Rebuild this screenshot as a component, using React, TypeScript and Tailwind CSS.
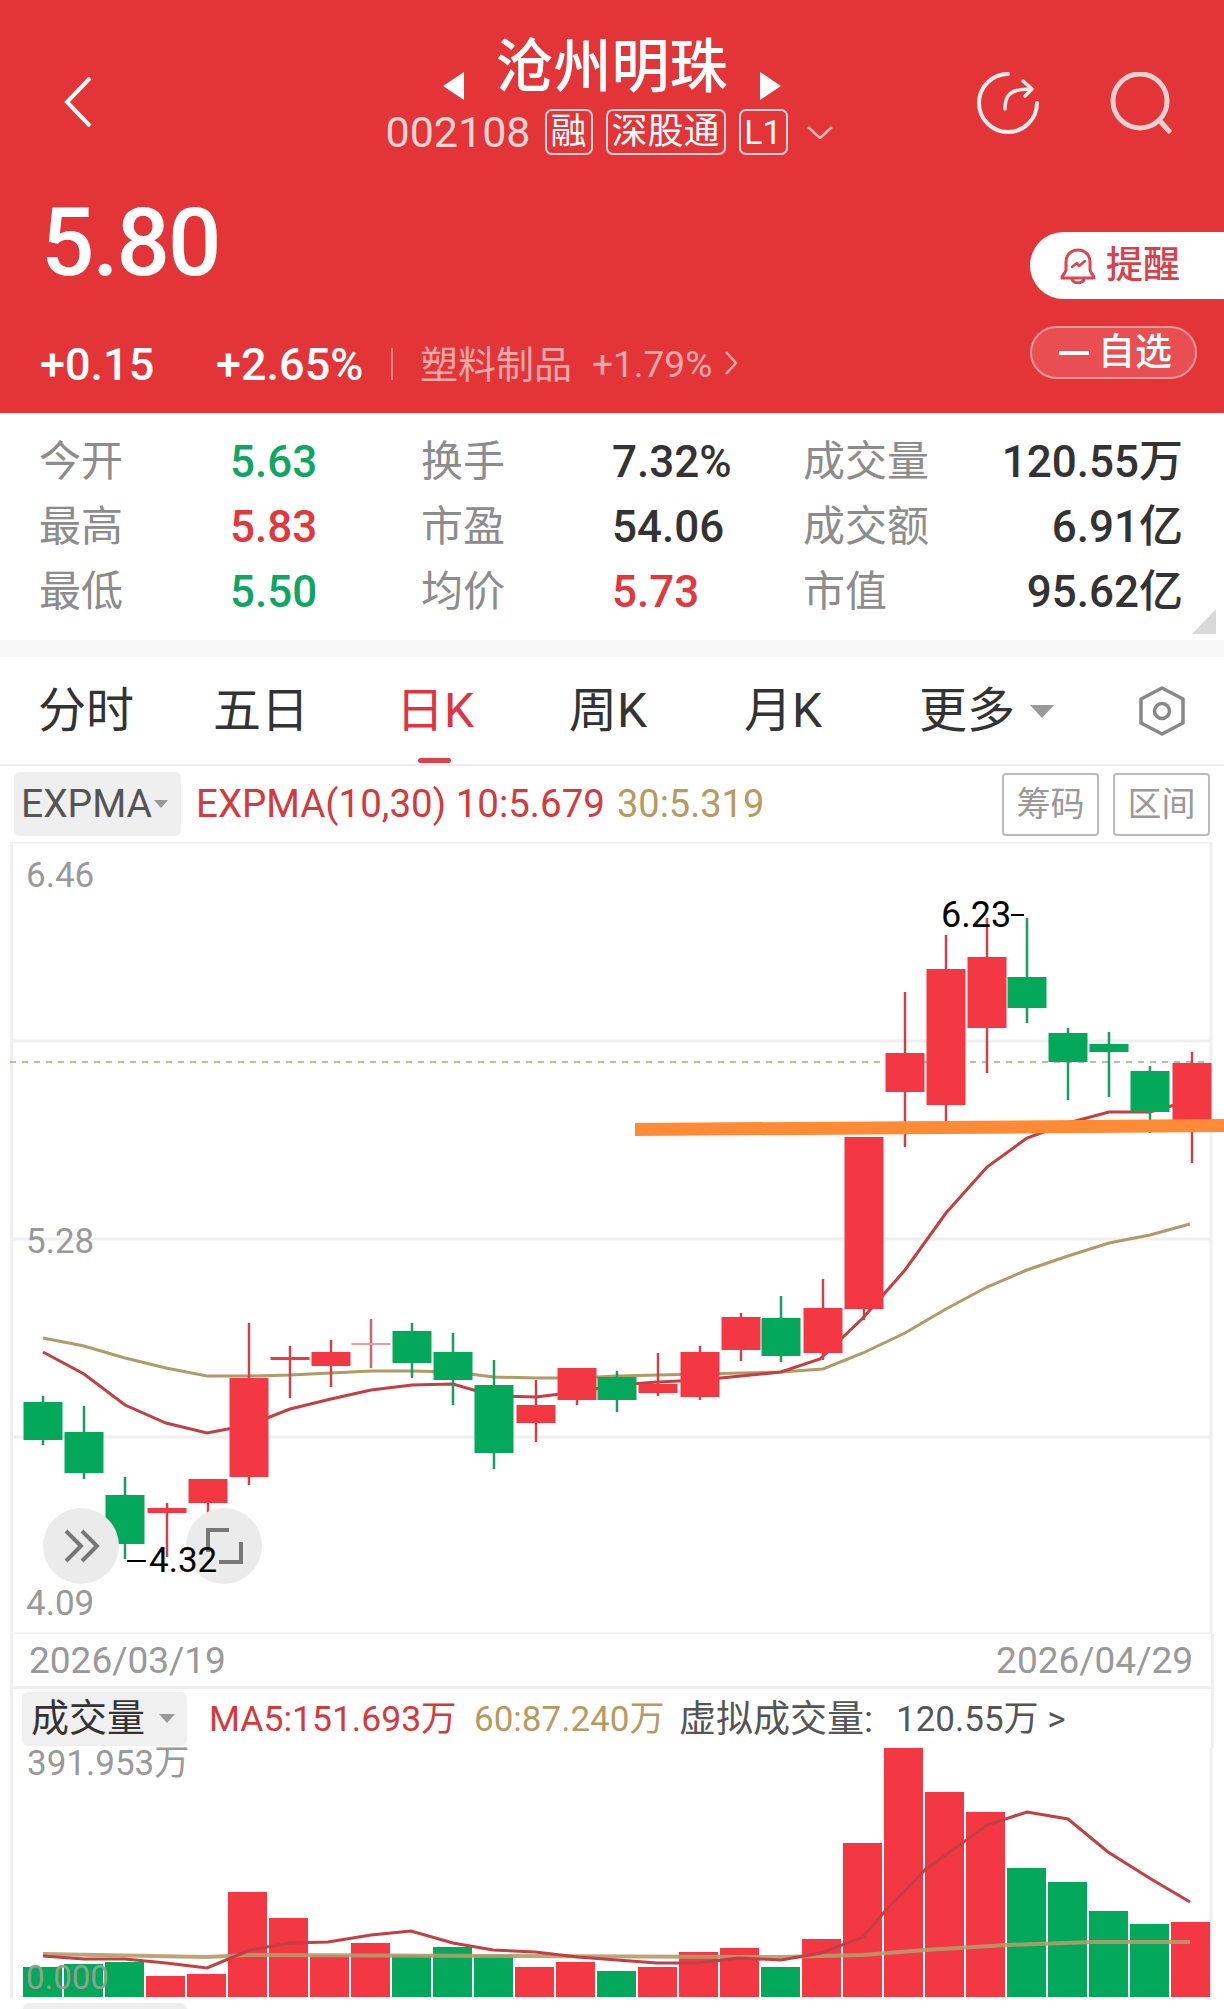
const RED = "#f43843";
const GREEN = "#04a85b";

// [x, bodyTop, bodyBottom, wickTop, wickBottom, color]
type Candle = [number, number, number, number, number, "r" | "g" | "p"];

const candles: Candle[] = [
  [43, 1402, 1440, 1396, 1445, "g"],
  [84, 1432, 1473, 1406, 1479, "g"],
  [125, 1495, 1544, 1477, 1559, "g"],
  [167, 1508, 1513, 1503, 1557, "r"],
  [208, 1479, 1503, 1479, 1515, "r"],
  [249, 1378, 1477, 1323, 1485, "r"],
  [290, 1357, 1360, 1346, 1398, "r"],
  [331, 1352, 1366, 1340, 1387, "r"],
  [371, 1343, 1345, 1319, 1368, "p"],
  [412, 1331, 1363, 1323, 1378, "g"],
  [453, 1352, 1380, 1333, 1405, "g"],
  [494, 1385, 1453, 1360, 1469, "g"],
  [536, 1405, 1423, 1380, 1442, "r"],
  [577, 1368, 1400, 1368, 1405, "r"],
  [617, 1377, 1400, 1371, 1412, "g"],
  [658, 1384, 1393, 1353, 1396, "r"],
  [700, 1352, 1397, 1346, 1400, "r"],
  [741, 1317, 1350, 1313, 1361, "r"],
  [781, 1318, 1356, 1296, 1362, "g"],
  [823, 1308, 1353, 1279, 1360, "r"],
  [864, 1137, 1309, 1137, 1320, "r"],
  [905, 1053, 1092, 992, 1147, "r"],
  [946, 969, 1105, 935, 1133, "r"],
  [987, 957, 1028, 918, 1073, "r"],
  [1027, 977, 1008, 918, 1023, "g"],
  [1068, 1033, 1062, 1028, 1100, "g"],
  [1109, 1044, 1052, 1032, 1097, "g"],
  [1150, 1071, 1112, 1066, 1133, "g"],
  [1192, 1063, 1122, 1052, 1163, "r"],
];

const expma10 =
  "43,1352 84,1374 125,1405 166,1423 207,1433 249,1425 290,1409 331,1399 371,1390 412,1385 453,1384 494,1396 536,1397 577,1392 617,1385 658,1382 700,1380 741,1376 781,1372 820,1359 863,1318 905,1270 946,1213 987,1167 1027,1138 1068,1123 1109,1112 1150,1112 1192,1100";
const expma30 =
  "43,1338 84,1346 125,1358 166,1368 207,1376 249,1376 290,1375 331,1373 371,1371 412,1371 453,1372 494,1377 536,1378 577,1378 617,1376 658,1375 700,1374 741,1373 781,1372 823,1369 863,1353 905,1333 946,1309 987,1287 1027,1270 1068,1256 1109,1243 1150,1235 1190,1224";

// [bar top, color] from left to right, baseline 1997
const volumes: [number, "r" | "g"][] = [
  [1967, "g"], [1964, "g"], [1962, "g"], [1976, "r"], [1974, "r"], [1892, "r"],
  [1918, "r"], [1955, "r"], [1943, "r"], [1955, "g"], [1947, "g"], [1955, "g"],
  [1967, "r"], [1962, "r"], [1971, "g"], [1967, "r"], [1952, "r"], [1948, "r"],
  [1967, "g"], [1939, "r"], [1843, "r"], [1747, "r"], [1792, "r"], [1812, "r"],
  [1868, "g"], [1882, "g"], [1911, "g"], [1924, "g"], [1922, "r"],
];

const ma5 =
  "43,1956 84,1959 125,1959 166,1963 207,1968 250,1950 290,1943 328,1942 371,1935 411,1931 453,1943 493,1950 535,1952 578,1957 617,1960 657,1963 699,1963 738,1958 781,1960 821,1953 863,1937 886,1910 925,1870 987,1825 1027,1812 1068,1819 1108,1852 1151,1879 1190,1902";
const ma60 = "43,1954 207,1957 250,1955 781,1957 863,1955 925,1950 1007,1945 1093,1942 1190,1942";

const stats = [
  ["今开", "5.63", "text-[#0fa563]", "换手", "7.32%", "text-[#333]", "成交量", "120.55万"],
  ["最高", "5.83", "text-[#e0383c]", "市盈", "54.06", "text-[#333]", "成交额", "6.91亿"],
  ["最低", "5.50", "text-[#0fa563]", "均价", "5.73", "text-[#e0383c]", "市值", "95.62亿"],
];

function PriceChart() {
  return (
    <div className="relative h-[792px]">
      <svg width="1224" height="792" viewBox="0 842 1224 792" className="block">
        {[842, 1041, 1239, 1437, 1634].map((y) => (
          <line key={y} x1="11" x2="1210" y1={y} y2={y} stroke="#efefef" strokeWidth="3" />
        ))}
        <line x1="11.5" x2="11.5" y1="842" y2="1634" stroke="#efefef" strokeWidth="3" />
        <line x1="1211" x2="1211" y1="842" y2="1634" stroke="#efefef" strokeWidth="3" />
        <line x1="10" x2="1210" y1="1062" y2="1062" stroke="#bdbda6" strokeWidth="2" strokeDasharray="6 6" />
        <polyline points={expma30} fill="none" stroke="#b09a68" strokeWidth="3" />
        <polyline points={expma10} fill="none" stroke="#c23f44" strokeWidth="3" />
        {candles.map(([x, top, bottom, wt, wb, c]) => {
          const wick = c === "g" ? "#1b9c60" : c === "p" ? "#c9646c" : "#c9434c";
          const fill = c === "g" ? GREEN : c === "p" ? "#ec9aa2" : RED;
          return (
            <g key={x}>
              <line x1={x} x2={x} y1={wt} y2={wb} stroke={wick} strokeWidth="2.5" />
              <rect x={x - 19.5} y={top} width="39" height={bottom - top} fill={fill} />
            </g>
          );
        })}
        <polygon points="635,1123 1224,1119 1224,1132 635,1136" fill="#ff8b36" />
        <circle cx="81" cy="1546" r="38" fill="#ebebeb" />
        <polyline points="66,1531 81,1546 66,1561" fill="none" stroke="#777" strokeWidth="4" />
        <polyline points="82,1531 97,1546 82,1561" fill="none" stroke="#777" strokeWidth="4" />
        <circle cx="224" cy="1546" r="38" fill="#ebebeb" />
        <polyline points="208,1552 208,1530 229,1530" fill="none" stroke="#777" strokeWidth="4" />
        <polyline points="241,1542 241,1562 219,1562" fill="none" stroke="#777" strokeWidth="4" />
        <line x1="127" x2="146" y1="1561" y2="1561" stroke="#000" strokeWidth="2" />
        <line x1="1011" x2="1024" y1="915" y2="915" stroke="#000" strokeWidth="2" />
      </svg>
      <span className="absolute left-[26px] top-[17px] text-[35px] leading-[34px] text-[#999]">6.46</span>
      <span className="absolute left-[26px] top-[383px] text-[35px] leading-[34px] text-[#999]">5.28</span>
      <span className="absolute left-[26px] top-[745px] text-[35px] leading-[34px] text-[#999]">4.09</span>
      <span className="absolute left-[941px] top-[55px] text-[36px] leading-[36px] text-black">6.23</span>
      <span className="absolute left-[149px] top-[701px] text-[35px] leading-[36px] text-black">4.32</span>
    </div>
  );
}

function VolumeChart() {
  return (
    <div className="relative h-[250px]">
      <svg width="1224" height="250" viewBox="0 1748 1224 250" className="block">
        <line x1="11.5" x2="11.5" y1="1748" y2="1998" stroke="#efefef" strokeWidth="3" />
        <line x1="1211" x2="1211" y1="1748" y2="1998" stroke="#efefef" strokeWidth="3" />
        {volumes.map(([top, c], i) => (
          <rect
            key={i}
            x={23 + i * 41}
            y={top}
            width="39"
            height={1997 - top}
            fill={c === "g" ? GREEN : RED}
          />
        ))}
        <polyline points={ma60} fill="none" stroke="#b59b6c" strokeWidth="4" opacity="0.9" />
        <polyline points={ma5} fill="none" stroke="#c23f44" strokeWidth="3" />
      </svg>
      <span className="absolute left-[27px] top-[-2px] text-[35px] leading-[36px] text-[#999]">391.953万</span>
      <span className="absolute left-[26px] top-[212px] text-[33px] leading-[36px] text-[#8fa08f]">0.000</span>
    </div>
  );
}

export default function App() {
  return (
    <div className="w-[1224px] h-[2009px] overflow-hidden bg-white font-['Roboto','Noto_Sans_CJK_SC',sans-serif]">
      {/* Red quote header */}
      <header className="h-[413px] bg-[#e33538] text-white flex flex-col">
        <div className="h-[160px] flex">
          <div className="w-[386px] pl-[64px] pt-[77px]">
            <svg width="28" height="50" viewBox="0 0 28 50" fill="none" stroke="#fff" strokeWidth="4">
              <polyline points="26,1 3,25 26,49" />
            </svg>
          </div>
          <div className="w-[446px] flex flex-col items-center">
            <div className="h-[109px] flex items-center pl-[5px]">
              <div className="w-0 h-0 mt-[62px] border-y-[14px] border-y-transparent border-r-[21px] border-r-white" />
              <span className="ml-[32px] pt-[25px] text-[58px] leading-[70px] font-medium w-[232px] text-center">沧州明珠</span>
              <div className="ml-[32px] w-0 h-0 mt-[62px] border-y-[14px] border-y-transparent border-l-[21px] border-l-white" />
            </div>
            <div className="h-[46px] flex items-center text-[#fbd5d5]">
              <span className="text-[43px] leading-[46px] mr-[14px]">002108</span>
              <span className="h-[46px] w-[48px] mr-[13px] flex items-center justify-center rounded-[7px] border-2 border-[#fbd5d5] text-white text-[36px] leading-none">融</span>
              <span className="h-[46px] w-[120px] mr-[13px] flex items-center justify-center rounded-[7px] border-2 border-[#fbd5d5] text-white text-[36px] leading-none">深股通</span>
              <span className="h-[46px] w-[49px] mr-[19px] flex items-center justify-center rounded-[7px] border-2 border-[#fbd5d5] text-white text-[34px] leading-none">L1</span>
              <svg width="26" height="13" viewBox="0 0 26 13" fill="none" stroke="#f9b9b9" strokeWidth="2.5">
                <polyline points="1,1 13,12 25,1" />
              </svg>
            </div>
          </div>
          <div className="flex-1 pl-[145px] pt-[72px] flex items-start gap-[71px]">
            <svg width="62" height="62" viewBox="0 0 62 62" fill="none" stroke="#fdeaea" strokeWidth="4" strokeLinecap="round" strokeLinejoin="round">
              <path d="M31 2 A29 29 0 1 0 60 31" />
              <path d="M28 37 C28 24 32 17 53 17" strokeWidth="3.5" />
              <polyline points="46,9 55,17 48,24" strokeWidth="3.5" />
            </svg>
            <svg width="62" height="62" viewBox="0 0 62 62" fill="none" stroke="#efd0d0" strokeWidth="5" strokeLinecap="round">
              <circle cx="30" cy="29" r="27" />
              <line x1="50" y1="49" x2="59" y2="59" />
            </svg>
          </div>
        </div>
        <div className="h-[166px] flex justify-between">
          <span className="ml-[41px] mt-[28px] text-[94px] leading-[110px] font-medium tracking-[-2px]">5.80</span>
          <div className="mt-[72px] h-[67px] w-[194px] rounded-l-[34px] bg-white flex items-center pl-[30px] gap-[10px] text-[#d8404a] text-[37px] font-medium">
            <svg width="36" height="36" viewBox="0 0 36 36" fill="none" stroke="#e04450" strokeWidth="3" strokeLinejoin="round" strokeLinecap="round">
              <path d="M2 30 C2 27 5 26 6 22 V14 C6 7 11 2 18 2 C25 2 30 7 30 14 V22 C31 26 34 27 34 30 Z" />
              <path d="M12 31 C13 36 23 36 24 31" />
              <polyline points="12,19 17,15 19,18 25,13" strokeWidth="2.5" />
            </svg>
            <span className="leading-none">提醒</span>
          </div>
        </div>
        <div className="flex items-start h-[87px]">
          <span className="ml-[40px] mt-[14px] w-[176px] text-[45px] leading-[50px] font-medium">+0.15</span>
          <span className="w-[175px] mt-[14px] text-[45px] leading-[50px] font-medium">+2.65%</span>
          <div className="mt-[22px] h-[32px] w-[2px] bg-[#f08080]" />
          <span className="ml-[27px] mt-[14px] text-[38px] leading-[50px] text-[#f6a9a9]">塑料制品</span>
          <span className="ml-[20px] mt-[14px] text-[37px] leading-[50px] text-[#f6a9a9]">+1.79%</span>
          <svg className="ml-[12px] mt-[25px]" width="14" height="24" viewBox="0 0 14 24" fill="none" stroke="#f6a9a9" strokeWidth="2.5">
            <polyline points="2,1 12,12 2,23" />
          </svg>
          <div className="ml-auto mr-[27px] h-[53px] w-[167px] rounded-[27px] border-2 border-[#f49a9a] bg-[#e94e53] flex items-center pl-[27px] text-[37px] font-medium text-white">
            <span className="w-[30px] h-[4px] bg-white mr-[9px]" />
            <span className="leading-none">自选</span>
          </div>
        </div>
      </header>

      {/* Quote stats */}
      <section className="relative h-[227px] pt-[16px] pl-[39px]">
        {stats.map((row) => (
          <div key={row[0]} className="h-[65px] flex items-center text-[42px]">
            <span className="w-[191px] text-[#8c8c8c]">{row[0]}</span>
            <span className={`w-[191px] text-[44px] font-medium ${row[2]}`}>{row[1]}</span>
            <span className="w-[191px] text-[#8c8c8c]">{row[3]}</span>
            <span className={`w-[191px] text-[44px] font-medium ${row[5]}`}>{row[4]}</span>
            <span className="w-[126px] text-[#8c8c8c]">{row[6]}</span>
            <span className="w-[254px] text-right text-[44px] font-medium text-[#333]">{row[7]}</span>
          </div>
        ))}
        <div className="absolute right-[8px] bottom-[6px] w-0 h-0 border-b-[25px] border-b-[#d9d9d9] border-l-[24px] border-l-transparent" />
      </section>
      <div className="h-[17px] bg-[#f8f8f8]" />

      {/* Period tabs */}
      <nav className="relative h-[109px] border-b-2 border-[#eee] text-[#333] text-[48px]">
        <div className="h-full flex items-center">
          <span className="ml-[38px] w-[175px]">分时</span>
          <span className="w-[183px]">五日</span>
          <span className="w-[173px] text-[#e03340]">日K</span>
          <span className="w-[175px]">周K</span>
          <span className="w-[175px]">月K</span>
          <span>更多</span>
          <div className="ml-[15px] mt-[2px] w-0 h-0 border-x-[12px] border-x-transparent border-t-[13px] border-t-[#999]" />
          <svg className="ml-[84px]" width="48" height="50" viewBox="0 0 48 50" fill="none" stroke="#888" strokeWidth="3.5">
            <path d="M24 2 L45 13 V37 L24 48 L3 37 V13 Z" strokeLinejoin="round" />
            <circle cx="24" cy="25" r="7.5" />
          </svg>
        </div>
        <div className="absolute left-[418px] bottom-[1px] w-[33px] h-[5px] rounded-full bg-[#e0404e]" />
      </nav>

      {/* Indicator row */}
      <div className="h-[76px] flex items-center text-[38.5px] pl-[14px] pr-[14px]">
        <div className="h-[64px] w-[167px] rounded-[6px] bg-[#efefef] flex items-center pl-[7px] text-[39px] text-[#555]">
          <span>EXPMA</span>
          <div className="ml-[2px] w-0 h-0 border-x-[7px] border-x-transparent border-t-[8px] border-t-[#999]" />
        </div>
        <span className="ml-[15px] text-[#d43a3c]">EXPMA(10,30) 10:5.679</span>
        <span className="ml-[12px] text-[38px] text-[#b89a5f]">30:5.319</span>
        <span className="ml-auto h-[63px] w-[97px] rounded-[4px] border-2 border-[#bbb] flex items-center justify-center text-[34px] text-[#999]">筹码</span>
        <span className="ml-[14px] h-[63px] w-[97px] rounded-[4px] border-2 border-[#bbb] flex items-center justify-center text-[34px] text-[#999]">区间</span>
      </div>

      <PriceChart />

      {/* Date axis */}
      <div className="h-[52px] mx-[10px] border-x-[3px] border-[#efefef] flex items-center justify-between pl-[16px] pr-[18px] pt-[1px] text-[37px] text-[#999]">
        <span>2026/03/19</span>
        <span>2026/04/29</span>
      </div>

      {/* Volume header */}
      <div className="h-[62px] mx-[10px] border-x-[3px] border-t-[3px] border-[#efefef] flex items-center pl-[9px] text-[35.5px]">
        <div className="h-[54px] w-[165px] rounded-[6px] bg-[#f0f0f0] flex items-center pl-[9px] text-[#333]">
          <span className="text-[38px]">成交量</span>
          <div className="ml-[14px] w-0 h-0 border-x-[8px] border-x-transparent border-t-[9px] border-t-[#999]" />
        </div>
        <span className="ml-[22px] pt-[3px] w-[265px] text-[#d43a3c]">MA5:151.693万</span>
        <span className="w-[205px] pt-[3px] text-[35px] text-[#b89a5f]">60:87.240万</span>
        <span className="w-[217px] pt-[3px] text-[37px] text-[#555]">虚拟成交量:</span>
        <span className="pt-[3px] text-[35px] text-[#555]">120.55万 &gt;</span>
      </div>

      <VolumeChart />

      {/* Next indicator chip, cut off by the window */}
      <div className="mt-[5px] ml-[23px] h-[6px] w-[164px] rounded-t-[6px] bg-[#eee]" />
    </div>
  );
}
